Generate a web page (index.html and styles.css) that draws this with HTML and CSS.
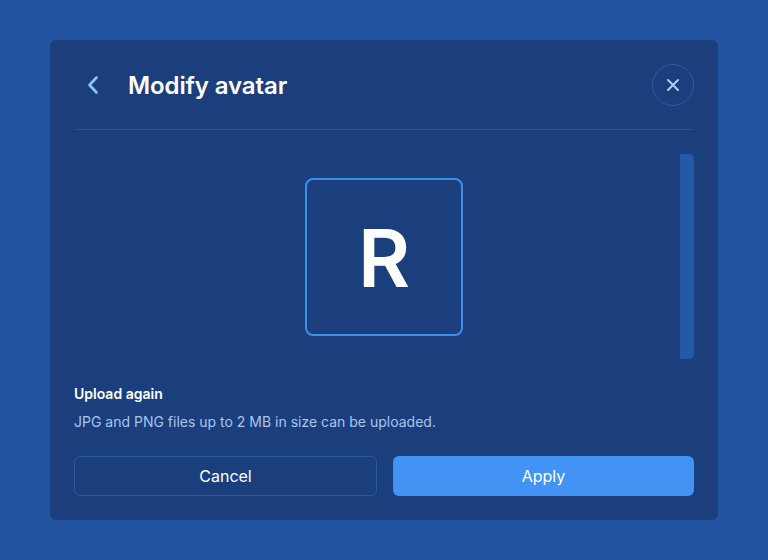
FILE: index.html
```html
<!DOCTYPE html>
<html>
<head>
<meta charset="utf-8">
<link rel="stylesheet" href="styles.css">
</head>
<body>
<div class="modal">
  <div class="header">
    <button class="back" aria-label="Back">
      <svg width="14" height="20" viewBox="0 0 14 20"><path d="M10.5 2.5 L3.5 10 L10.5 17.5" fill="none" stroke="#8cc4f5" stroke-width="2.6" stroke-linecap="round" stroke-linejoin="round"/></svg>
    </button>
    <h1 class="title">Modify avatar</h1>
    <button class="close" aria-label="Close">
      <svg width="14" height="14" viewBox="0 0 14 14"><path d="M2 2 L12 12 M12 2 L2 12" fill="none" stroke="#a8d2fa" stroke-width="2" stroke-linecap="round"/></svg>
    </button>
  </div>
  <div class="body">
    <div class="scrollbar"></div>
    <div class="avatar">R</div>
    <div class="info">
      <div class="info-title">Upload again</div>
      <div class="info-desc">JPG and PNG files up to 2 MB in size can be uploaded.</div>
    </div>
    <div class="actions">
      <button class="btn cancel">Cancel</button>
      <button class="btn apply">Apply</button>
    </div>
  </div>
</div>
</body>
</html>
```
FILE: styles.css
```css
* { box-sizing: border-box; }
html, body { margin: 0; padding: 0; }
body {
  background: #2253a0;
  font-family: Inter, "Noto Sans", sans-serif;
  width: 768px;
  height: 560px;
  padding: 40px 50px;
}
.modal {
  background: #1b3f7d;
  border-radius: 6px;
  height: 480px;
  position: relative;
  display: flex;
  flex-direction: column;
}
.header {
  margin: 0 24px;
  padding: 24px 0 23px;
  display: flex;
  align-items: center;
  border-bottom: 1px solid #275399;
}
button {
  font-family: inherit;
  cursor: pointer;
}
.back {
  background: none;
  border: none;
  padding: 0;
  margin-left: 12px;
  width: 14px;
  height: 20px;
  display: flex;
}
.title {
  margin: 0 0 0 28px;
  font-size: 24px;
  font-weight: 600;
  color: #ffffff;
  flex: 1;
  letter-spacing: -0.1px;
}
.close {
  width: 42px;
  height: 42px;
  border-radius: 50%;
  border: 1px solid #2d5aa3;
  background: transparent;
  display: flex;
  align-items: center;
  justify-content: center;
  padding: 0;
}
.body {
  padding: 48px 24px 24px;
  display: flex;
  flex-direction: column;
  flex: 1;
}
.scrollbar {
  position: absolute;
  right: 24px;
  top: 114px;
  width: 14px;
  height: 205px;
  background: #2458a8;
  border-radius: 0 5px 5px 0;
}
.avatar {
  align-self: center;
  width: 158px;
  height: 158px;
  border: 2px solid #3d8ee8;
  border-radius: 8px;
  display: flex;
  align-items: center;
  justify-content: center;
  color: #ffffff;
  font-size: 80px;
  font-weight: 600;
}
.info {
  margin-top: 48px;
}
.info-title {
  font-size: 14px;
  line-height: 20px;
  font-weight: 600;
  color: #ffffff;
}
.info-desc {
  margin-top: 8px;
  font-size: 14px;
  line-height: 20px;
  color: #a9c5ef;
}
.actions {
  margin-top: 24px;
  display: flex;
  gap: 16px;
}
.btn {
  flex: 1 1 0;
  min-width: 0;
  height: 40px;
  border-radius: 6px;
  font-size: 16px;
  color: #ffffff;
  padding: 0;
}
.cancel {
  background: transparent;
  border: 1px solid #2c589f;
}
.apply {
  background: #4393f4;
  border: none;
}
```
